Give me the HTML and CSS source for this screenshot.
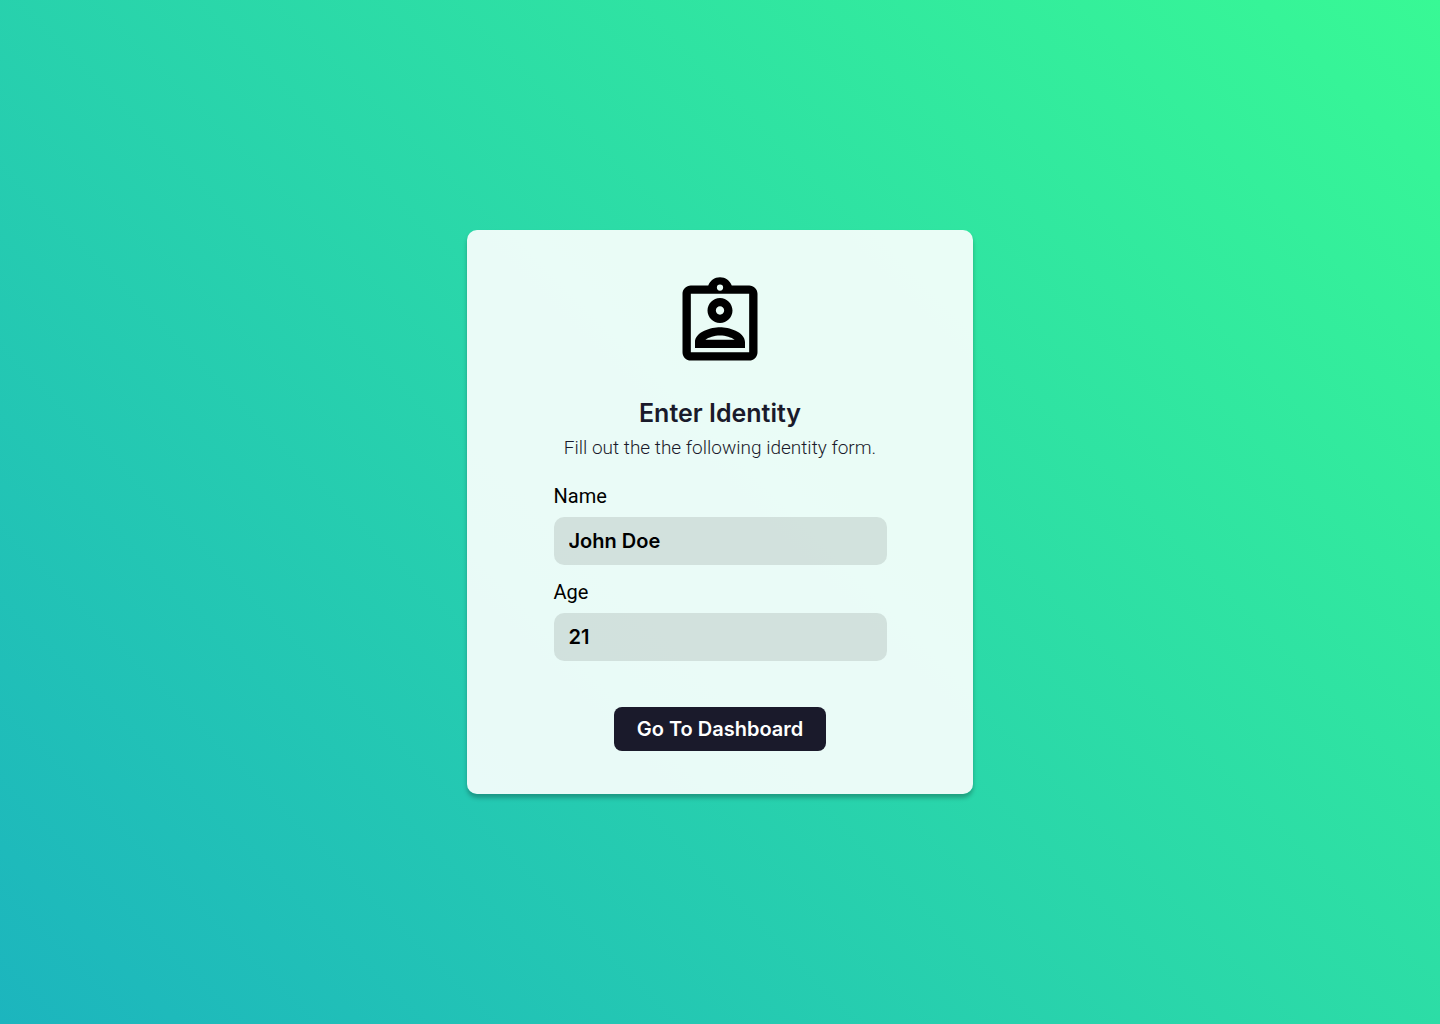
FILE: index.html
```html
<!DOCTYPE html>
<html lang="en">
<head>
  <meta charset="utf-8">
  <meta name="viewport" content="width=device-width, initial-scale=1">
  <title>Enter Identity</title>
  <link rel="stylesheet" href="styles.css">
</head>
<body>
  <main class="page">
    <form class="card">
      <svg class="card-icon" viewBox="0 0 24 24" aria-hidden="true">
        <path fill-rule="evenodd" d="M19 3h-4.18C14.4 1.84 13.3 1 12 1s-2.4.84-2.82 2H5c-1.1 0-2 .9-2 2v14c0 1.1.9 2 2 2h14c1.1 0 2-.9 2-2V5c0-1.1-.9-2-2-2zm-7-.25a.75.75 0 1 1 0 1.5.75.75 0 0 1 0-1.5zM19 19H5V5h14v14z"/>
        <path fill-rule="evenodd" d="M12 12c1.65 0 3-1.35 3-3s-1.35-3-3-3-3 1.35-3 3 1.35 3 3 3zm0-4c.55 0 1 .45 1 1s-.45 1-1 1-1-.45-1-1 .45-1 1-1zm6 8.58c0-2.5-3.97-3.58-6-3.58s-6 1.08-6 3.58V18h12v-1.42zM8.48 16c.74-.51 2.23-1 3.52-1s2.78.49 3.52 1H8.48z"/>
      </svg>
      <h1 class="card-title">Enter Identity</h1>
      <p class="card-text">Fill out the the following identity form.</p>
      <div class="fields">
        <div class="field">
          <label class="field-label" for="name">Name</label>
          <input class="field-input" id="name" type="text" value="John Doe">
        </div>
        <div class="field">
          <label class="field-label" for="age">Age</label>
          <input class="field-input" id="age" type="text" inputmode="numeric" value="21">
        </div>
      </div>
      <button class="submit" type="button">Go To Dashboard</button>
    </form>
  </main>
</body>
</html>
```

FILE: styles.css
```css
* {
  box-sizing: border-box;
}

body {
  margin: 0;
  font-family: Inter, "Liberation Sans", sans-serif;
  color: #000;
}

.page {
  min-height: 100vh;
  display: flex;
  align-items: center;
  justify-content: center;
  background: linear-gradient(45deg, #1cb5be, #38f995);
}

.card {
  width: 100%;
  max-width: 506px;
  padding: 43px 24px;
  display: flex;
  flex-direction: column;
  align-items: center;
  border-radius: 10px;
  background: rgba(255, 255, 255, 0.9);
  box-shadow: 0 4px 4px rgba(0, 0, 0, 0.25);
}

.card-icon {
  width: 100px;
  height: 100px;
}

.card-title {
  margin: 24px 0 0;
  font-size: 25px;
  font-weight: 600;
  line-height: 32px;
  color: #1a1a2b;
}

.card-text {
  margin: 7px 0 0;
  font-family: Roboto, "Liberation Sans", sans-serif;
  font-size: 19px;
  font-weight: 300;
  line-height: 24px;
  color: #1a1a2b;
}

.fields {
  width: 100%;
  max-width: 333px;
  margin-top: 24px;
  display: grid;
  gap: 15px;
}

.field {
  display: grid;
  gap: 9px;
}

.field-label {
  font-family: Roboto, "Liberation Sans", sans-serif;
  font-size: 20px;
  line-height: 24px;
}

.field-input {
  width: 100%;
  height: 48px;
  padding: 0 15px;
  border: 0;
  border-radius: 10px;
  background: rgba(0, 0, 0, 0.1);
  color: #000;
  font-family: inherit;
  font-size: 20px;
  font-weight: 600;
}

.submit {
  height: 44px;
  margin-top: 46px;
  padding: 0 23px;
  border: 0;
  border-radius: 8px;
  background: #1a1a2b;
  color: #fff;
  font-family: inherit;
  font-size: 20px;
  font-weight: 600;
}
```
